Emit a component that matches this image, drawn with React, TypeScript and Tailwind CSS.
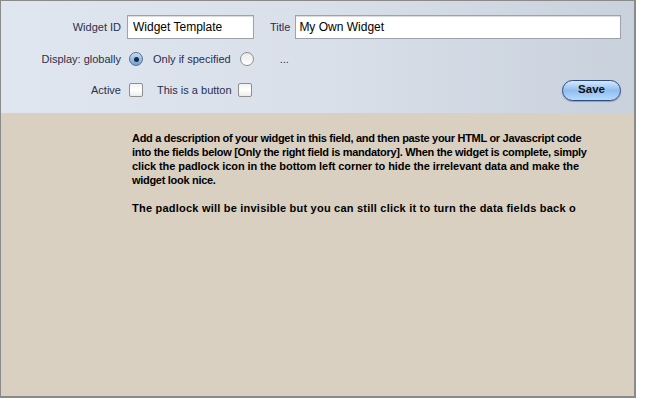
export default function App() {
  return (
    <div className="w-[646px] h-[407px] bg-white font-['Liberation_Sans',Arial,sans-serif]">
      <div className="w-[636px] h-[398px] border-t border-l border-r-2 border-b-2 border-[#8a8a8a] flex flex-col bg-[#d9d0c1]">
        {/* Kopf mit Feldern */}
        <div className="h-[112px] bg-gradient-to-r from-[#e0e6ef] via-[#d9e0ea] to-[#c9d1dc] pr-[13px] pt-[14px] text-[11px] text-[#2b2e4e]">
          <div className="flex items-center h-[24px]">
            <span className="w-[120px] text-right">Widget ID</span>
            <input
              readOnly
              value="Widget Template"
              className="ml-[6px] w-[127px] h-[24px] bg-white border border-[#9ea3ab] shadow-[inset_0_1px_1px_rgba(0,0,0,0.15)] px-[5px] text-[12px] text-black outline-none"
            />
            <span className="ml-[16px]">Title</span>
            <input
              readOnly
              value="My Own Widget"
              className="ml-[5px] flex-1 h-[24px] bg-white border border-[#9ea3ab] shadow-[inset_0_1px_1px_rgba(0,0,0,0.15)] px-[3px] text-[12px] text-black outline-none"
            />
          </div>
          <div className="flex items-center h-[18px] mt-[11px]">
            <span className="w-[120px] text-right">Display: globally</span>
            <span className="ml-[8px] w-[14px] h-[14px] rounded-full border border-[#5a6f8e] bg-gradient-to-b from-[#c5dcf3] to-[#6fa3d8] flex items-center justify-center">
              <span className="w-[5px] h-[5px] rounded-full bg-[#1b2a45]" />
            </span>
            <span className="ml-[10px]">Only if specified</span>
            <span className="ml-[9px] w-[14px] h-[14px] rounded-full border border-[#8e8e8e] bg-gradient-to-b from-[#e9e9e9] to-[#ffffff]" />
            <span className="ml-[26px]">...</span>
          </div>
          <div className="flex items-center h-[24px] mt-[10px]">
            <span className="w-[120px] text-right">Active</span>
            <span className="ml-[8px] w-[14px] h-[14px] rounded-[2px] border border-[#8e8e8e] bg-gradient-to-b from-[#f2f2f2] via-white to-[#ececec]" />
            <span className="ml-[14px]">This is a button</span>
            <span className="ml-[6px] w-[14px] h-[14px] rounded-[2px] border border-[#8e8e8e] bg-gradient-to-b from-[#f2f2f2] via-white to-[#ececec]" />
            <button className="ml-auto w-[59px] h-[21px] rounded-full border border-[#2b4c86] bg-gradient-to-b from-[#d7e8fa] via-[#8fbdf0] to-[#b7dafa] text-[11.5px] font-bold text-[#111] shadow-[0_1px_1px_rgba(0,0,0,0.25)]">
              Save
            </button>
          </div>
        </div>

        {/* Beschreibung */}
        <div className="pl-[131px] pt-[18px] text-[11px] leading-[14px] font-bold text-black whitespace-nowrap">
          <p>
            <span className="block tracking-[-0.3px]">
              Add a description of your widget in this field, and then paste your HTML or Javascript code
            </span>
            <span className="block tracking-[-0.3px]">
              into the fields below [Only the right field is mandatory]. When the widget is complete, simply
            </span>
            <span className="block tracking-[-0.08px]">
              click the padlock icon in the bottom left corner to hide the irrelevant data and make the
            </span>
            <span className="block tracking-[-0.3px]">widget look nice.</span>
          </p>
          <p className="mt-[14px] tracking-[0.22px]">
            The padlock will be invisible but you can still click it to turn the data fields back o
          </p>
        </div>
      </div>
    </div>
  );
}
